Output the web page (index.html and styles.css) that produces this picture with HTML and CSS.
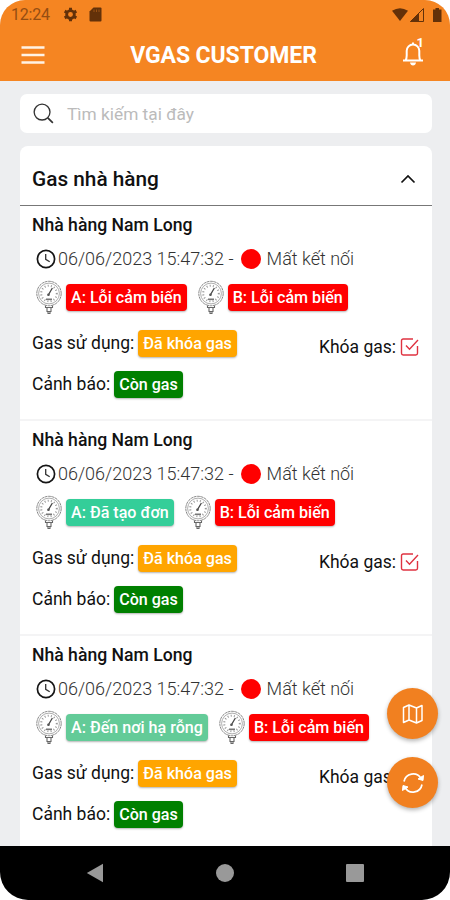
FILE: index.html
```html
<!DOCTYPE html>
<html lang="vi">
<head>
<meta charset="utf-8">
<title>VGAS Customer</title>
<link rel="stylesheet" href="styles.css">
</head>
<body>
<svg width="0" height="0" class="defs">
  <symbol id="clock" viewBox="0 0 20 20"><circle cx="10" cy="10" r="8.6" fill="none" stroke="#151515" stroke-width="1.7"/><path d="M9.7 5v5.3l4 2.5" fill="none" stroke="#333" stroke-width="1.3"/></symbol>
  <symbol id="gauge" viewBox="0 0 26 34">
    <g fill="none" stroke="#8a8a8a">
      <circle cx="13" cy="13.5" r="12.2" stroke-width="1" stroke-dasharray="3 .5"/>
      <circle cx="13" cy="13.5" r="10.4" stroke-width=".7"/>
      <circle cx="13" cy="13.5" r="7.8" stroke-width="2" stroke-dasharray="1 2.2" stroke="#999"/>
      <path d="M12 15.5l4.4-7.5" stroke="#444" stroke-width="1.3"/>
      <path d="M10 19.3h6" stroke="#777" stroke-width="1.6"/>
      <path d="M9.5 25.500v2h7v-2M11 28v3.500h4V28M12 32v1.500h2V32" stroke="#666" stroke-width="1.1"/>
    </g>
    <circle cx="12.500" cy="14.700" r="1.300" fill="#555"/>
  </symbol>
  <symbol id="check" viewBox="0 0 20 20"><path d="M13 2H3.200Q1.500 2 1.500 3.700v12.600Q1.500 18 3.200 18h12.600q1.700 0 1.700-1.700V9M6 8.500l3.500 3.700L18 3" fill="none" stroke="#df3341" stroke-width="1.400"/></symbol>
</svg>
<div class="screen">
  <header class="top">
    <div class="status">
      <span class="clock">12:24</span>
      <svg class="gear" viewBox="0 0 16 16"><circle cx="8" cy="8" r="4.100" fill="none" stroke="#633109" stroke-width="3"/><path d="M8 .8v3M8 12.200v3M1.800 4.400l2.600 1.500M11.600 10.100l2.600 1.500M1.800 11.600l2.600-1.500M11.600 5.900l2.600-1.500" stroke="#633109" stroke-width="3.200"/></svg>
      <svg class="sd" viewBox="0 0 13 15"><path d="M4.500.5h7q1 0 1 1v12q0 1-1 1h-10q-1 0-1-1v-9z" fill="#633109"/><path d="M5 2.500v2.500M7.500 2.500v2.500M10 2.500v2.500" stroke="#a85b18" stroke-width=".8"/></svg>
      <svg class="signals" viewBox="0 0 52 16"><path d="M1 3.800Q9 -1.500 17 3.800L9 14z" fill="#633109"/><path d="M32.500 1.500v13h-13z" fill="none" stroke="#633109"/><path d="M28 6v9h-9z" fill="#633109"/><path d="M42 2.500h2.500V1h3.500v1.500h2.500V15H42z" fill="#633109"/></svg>
    </div>
    <div class="appbar">
      <svg class="menu" viewBox="0 0 24 20"><path d="M.5 2.500h23M.5 10h23M.5 17.500h23" stroke="#fff3e6" stroke-width="2.400"/></svg>
      <h1>VGAS CUSTOMER</h1>
      <div class="bell">
        <svg viewBox="0 0 22 26"><path d="M1 19.500h20M3.500 19.500q1.200-1.700 1.200-5V9.800a6.300 6.300 0 0 1 12.600 0v4.700q0 3.300 1.200 5M11 3.500V1.500" fill="none" stroke="#fff" stroke-width="2"/><path d="M8 21.500h6q-.5 3-3 3t-3-3z" fill="#fff"/></svg>
        <span class="count">1</span>
      </div>
    </div>
  </header>
  <main class="content">
    <div class="search">
      <svg viewBox="0 0 22 22"><circle cx="9.500" cy="9.500" r="8.300" fill="none" stroke="#333" stroke-width="1.400"/><path d="M15.500 15.500l5.300 5.300" stroke="#333" stroke-width="1.800"/></svg>
      <span>Tìm kiếm tại đây</span>
    </div>
    <section class="card">
      <div class="group"><h2>Gas nhà hàng</h2><svg viewBox="0 0 16 10"><path d="M1.500 8.500L8 2l6.500 6.500" fill="none" stroke="#111" stroke-width="1.700"/></svg></div>
      <article class="item">
        <h3>Nhà hàng Nam Long</h3>
        <div class="time"><svg><use href="#clock"/></svg><span class="date">06/06/2023 15:47:32 -</span><i class="dot"></i><span class="state">Mất kết nối</span></div>
        <div class="sensors"><svg><use href="#gauge"/></svg><b class="badge red">A: Lỗi cảm biến</b><svg><use href="#gauge"/></svg><b class="badge red">B: Lỗi cảm biến</b></div>
        <div class="usage"><span>Gas sử dụng:</span><b class="badge amber">Đã khóa gas</b><span class="lock">Khóa gas:<svg><use href="#check"/></svg></span></div>
        <div class="alert"><span>Cảnh báo:</span><b class="badge green">Còn gas</b></div>
      </article>
      <article class="item">
        <h3>Nhà hàng Nam Long</h3>
        <div class="time"><svg><use href="#clock"/></svg><span class="date">06/06/2023 15:47:32 -</span><i class="dot"></i><span class="state">Mất kết nối</span></div>
        <div class="sensors"><svg><use href="#gauge"/></svg><b class="badge teal">A: Đã tạo đơn</b><svg><use href="#gauge"/></svg><b class="badge red">B: Lỗi cảm biến</b></div>
        <div class="usage"><span>Gas sử dụng:</span><b class="badge amber">Đã khóa gas</b><span class="lock">Khóa gas:<svg><use href="#check"/></svg></span></div>
        <div class="alert"><span>Cảnh báo:</span><b class="badge green">Còn gas</b></div>
      </article>
      <article class="item">
        <h3>Nhà hàng Nam Long</h3>
        <div class="time"><svg><use href="#clock"/></svg><span class="date">06/06/2023 15:47:32 -</span><i class="dot"></i><span class="state">Mất kết nối</span></div>
        <div class="sensors"><svg><use href="#gauge"/></svg><b class="badge mint">A: Đến nơi hạ rỗng</b><svg><use href="#gauge"/></svg><b class="badge red">B: Lỗi cảm biến</b></div>
        <div class="usage"><span>Gas sử dụng:</span><b class="badge amber">Đã khóa gas</b><span class="lock">Khóa gas:<svg><use href="#check"/></svg></span></div>
        <div class="alert"><span>Cảnh báo:</span><b class="badge green">Còn gas</b></div>
      </article>
    </section>
    <div class="fabs">
      <div class="fab"><svg viewBox="0 0 22 22"><path d="M1.500 4.500L7 2l7.500 3L20 2.500V17.500L14.500 20 7 17l-5.500 2.500zM7 2v15M14.500 5v15" fill="none" stroke="#fff" stroke-width="1.500" stroke-linejoin="round"/></svg></div>
      <div class="fab"><svg viewBox="0 0 22 22"><path d="M2 9.500A9.200 9.200 0 0 1 19 6.500M20 12.500A9.200 9.200 0 0 1 3 15.500" fill="none" stroke="#fff" stroke-width="1.700"/><path d="M21.500 3.500l-.5 5-5-1.500zM.5 18.500l.5-5 5 1.500z" fill="#fff" stroke="#fff" stroke-linejoin="round"/></svg></div>
    </div>
  </main>
  <nav class="nav">
    <svg viewBox="0 0 18 20"><path d="M17 .8v18.400L.8 10z" fill="#999"/></svg>
    <svg viewBox="0 0 18 20"><circle cx="9" cy="10" r="9" fill="#999"/></svg>
    <svg viewBox="0 0 18 20"><rect y="1" width="18" height="18" rx="1" fill="#999"/></svg>
  </nav>
</div>
</body>
</html>
```
FILE: styles.css
```css
* { box-sizing: border-box; }
body { margin: 0; background: #fff; font-family: Roboto, "Liberation Sans", sans-serif; color: #111; }
h1, h2, h3 { margin: 0; }
svg { display: block; flex: none; }
.defs { position: absolute; }
.screen { width: 450px; height: 900px; display: flex; flex-direction: column; overflow: hidden; border-radius: 25px 25px 28px 28px; background: #edeef0; }
.top { height: 81px; flex: none; background: #f58522; }
.status { height: 29px; display: flex; align-items: center; padding: 0 7px 0 11px; color: #944d12; font-size: 16px; }
.clock { width: 52px; letter-spacing: -.2px; }
.gear { width: 15px; height: 15px; }
.sd { width: 13px; height: 15px; margin-left: 11px; }
.signals { width: 52px; height: 16px; margin-left: auto; }
.appbar { height: 52px; display: flex; align-items: center; padding: 0 26px 0 21px; }
.menu { width: 24px; height: 20px; }
.appbar h1 { flex: 1; text-align: center; font-size: 23px; font-weight: 700; color: #fff; letter-spacing: -.1px; padding-top: 1px; }
.bell { position: relative; width: 22px; height: 26px; margin-top: -3px; }
.bell svg { width: 22px; height: 26px; }
.count { position: absolute; right: 0; top: -5px; color: #fff; font-size: 13px; line-height: 13px; font-weight: 700; }
.content { position: relative; flex: 1; min-height: 0; padding: 13px 18px 0 20px; }
.search { height: 39px; border-radius: 7px; background: #fff; display: flex; align-items: center; gap: 13px; padding-left: 13px; font-size: 17.300px; color: #bbb; }
.search svg { width: 21px; height: 21px; }
.card { margin-top: 13px; height: 700px; overflow: hidden; border-radius: 8px 8px 0 0; background: #fff; }
.group { height: 60px; border-bottom: 1px solid #777; display: flex; align-items: center; justify-content: space-between; padding: 7px 16px 0 12px; }
.group h2 { font-size: 20.800px; font-weight: 500; }
.group svg { width: 16px; height: 10px; }
.item { height: 215px; border-bottom: 2px solid #f4f4f5; padding: 6px 12px 0; font-size: 17.500px; }
.item h3 { font-size: 17.600px; font-weight: 500; line-height: 27px; height: 27px; }
.time { display: flex; align-items: center; height: 39px; padding-left: 4px; color: #333; font-weight: 300; font-size: 18px; }
.time svg { width: 20px; height: 20px; }
.date { margin-left: 2px; }
.dot { width: 20px; height: 20px; border-radius: 50%; background: #f00; margin: 0 6px 0 7px; }
.sensors { display: flex; align-items: center; height: 38px; padding-left: 4px; }
.sensors svg { width: 26px; height: 34px; margin-right: 4px; }
.sensors .badge + svg { margin-left: 11px; }
.badge { display: block; flex: none; height: 27px; line-height: 28px; padding: 0 5px; border-radius: 4px; color: #fff; font-weight: 500; font-size: 16.100px; box-shadow: 0 1px 2px rgba(0, 0, 0, .3); white-space: nowrap; }
.red { background: #f00; }
.amber { background: #ffa500; }
.green { background: #008000; }
.teal { background: #34ce99; }
.mint { background: #63cb98; }
.usage { display: flex; align-items: center; height: 40px; margin-top: 7px; }
.usage .badge, .alert .badge { margin-left: 4px; }
.lock { display: flex; align-items: center; margin-left: auto; margin-top: 8px; }
.lock svg { width: 20px; height: 20px; margin-left: 4px; }
.alert { display: flex; align-items: center; height: 42px; }
.fabs { position: absolute; right: 12px; bottom: 38px; display: flex; flex-direction: column; gap: 18px; }
.fab { width: 51px; height: 51px; border-radius: 50%; background: #f18020; display: flex; align-items: center; justify-content: center; box-shadow: 0 2px 4px rgba(0, 0, 0, .3); }
.fab svg { width: 22px; height: 22px; }
.nav { height: 54px; flex: none; background: #000; display: flex; align-items: center; justify-content: space-between; padding: 0 86px; }
.nav svg { width: 18px; height: 20px; }
```
